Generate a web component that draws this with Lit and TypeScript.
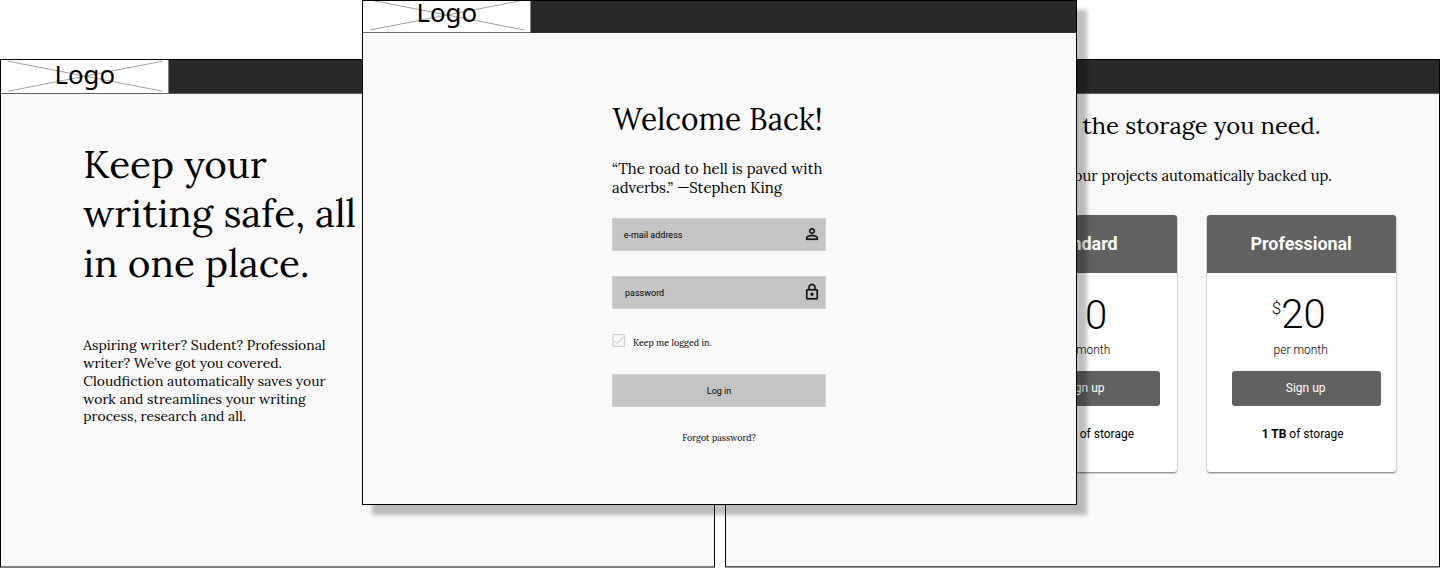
import { LitElement, html, css, svg } from "lit";
import { customElement, property } from "lit/decorators.js";

const personPath = svg`<path d="M12 5.9a2.1 2.1 0 1 1 0 4.2 2.1 2.1 0 0 1 0-4.2m0 9c2.97 0 6.1 1.46 6.1 2.1v1.1H5.9V17c0-.64 3.13-2.1 6.1-2.1M12 4C9.79 4 8 5.79 8 8s1.79 4 4 4 4-1.79 4-4-1.79-4-4-4zm0 9c-2.67 0-8 1.34-8 4v3h16v-3c0-2.66-5.33-4-8-4z"/>`;
const lockPath = svg`<path d="M12 17c1.1 0 2-.9 2-2s-.9-2-2-2-2 .9-2 2 .9 2 2 2zm6-9h-1V6c0-2.76-2.24-5-5-5S7 3.24 7 6v2H6c-1.1 0-2 .9-2 2v10c0 1.1.9 2 2 2h12c1.1 0 2-.9 2-2V10c0-1.1-.9-2-2-2zM8.9 6c0-1.71 1.39-3.1 3.1-3.1s3.1 1.39 3.1 3.1v2H8.9V6zM18 20H6V10h12v10z"/>`;

@customElement("app-header")
class AppHeader extends LitElement {
  static styles = css`
    :host { display: flex; background: #292929; border-bottom: 1px solid #5f5f5f; height: 33px; }
    .logo {
      display: grid; grid-template-rows: 100%; width: 167px; height: 100%; background: #fff;
      border-right: 1px solid #8a8a8a;
    }
    .logo > * { grid-area: 1 / 1; }
    .cross { display: block; width: 167px; height: 33px; overflow: hidden; }
    .name {
      font: 25.8px/30px "Noto Sans", sans-serif; color: #000;
      margin-left: 53.4px; margin-top: -1.5px;
    }
    :host([compact]) { height: 31px; border-bottom-color: #333; }
    :host([compact]) .logo { box-shadow: 0 1px 0 #6a6a6a; }
    :host([compact]) .cross { height: 31px; }
    :host([compact]) .name { line-height: 25px; margin-top: -1px; }
  `;
  @property({ type: Boolean, reflect: true }) compact = false;
  render() {
    const y = this.compact ? -1 : 1.2;
    return html`<div class="logo">
      <svg class="cross" fill="none" stroke="#777" stroke-width="0.7">
        <path d="M7 ${y} L161.5 ${y + 30} M161.5 ${y} L7 ${y + 30}" />
      </svg>
      <span class="name">Logo</span>
    </div>`;
  }
}

@customElement("price-card")
class PriceCard extends LitElement {
  static styles = css`
    :host {
      display: flex; flex-direction: column; width: 189px; height: 256.3px; background: #fff;
      border-radius: 3px; box-shadow: 0 1px 2px rgba(0, 0, 0, 0.55);
      font-family: Roboto, sans-serif; color: #000; text-align: center; white-space: nowrap;
    }
    .name {
      background: #616161; color: #fff; font-weight: 700; font-size: 17.9px; line-height: 57.7px;
      border-radius: 3px 3px 0 0; padding-right: 1px;
    }
    .price {
      display: flex; justify-content: center; padding: 17.6px 6px 0 0; margin-bottom: -0.1px;
      font-weight: 300; font-size: 40px; line-height: 47px;
    }
    .currency { font-size: 17px; line-height: 20px; margin-top: 7px; }
    .period { font-weight: 300; font-size: 12px; line-height: 14px; margin-top: 5.6px; padding-right: 2px; }
    .signup {
      background: #616161; color: #fff; font: 12px/34.5px Roboto, sans-serif; width: 149px; border: 0;
      border-radius: 3px; margin: 13.9px 0 0 25px; padding: 0 2px 0 0; height: 34.5px;
    }
    .storage { font-size: 12px; line-height: 14px; margin-top: 21.3px; padding-left: 2px; }
    :host([plan="Standard"]) .name { padding-right: 3px; }
    :host([plan="Standard"]) .price { padding: 18.6px 5px 0 0; margin-bottom: -1.1px; }
    :host([plan="Standard"]) .period { padding: 0 0 0 1px; }
    :host([plan="Standard"]) .signup { margin-left: 23px; }
    :host([plan="Standard"]) .storage { padding-left: 6px; }
  `;
  @property({ reflect: true }) plan = "";
  @property() amount = "";
  @property() space = "";
  render() {
    return html`
      <div class="name">${this.plan}</div>
      <div class="price"><span class="currency">$</span><span>${this.amount}</span></div>
      <div class="period">per month</div>
      <button class="signup">Sign up</button>
      <div class="storage"><b>${this.space}</b> of storage</div>
    `;
  }
}

@customElement("app-root")
class AppRoot extends LitElement {
  static styles = css`
    :host {
      display: block; position: relative; width: 1440px; height: 568px; overflow: hidden;
      background: #fff; color: #000; font-family: Lora, "Liberation Serif", serif;
    }
    .window { position: absolute; box-sizing: border-box; border: 1px solid #000; background: #f9f9f9; }
    h1, h2, p { margin: 0; font-weight: 400; white-space: nowrap; }
    .landing { left: 0; top: 59px; width: 715px; height: 509px; border-bottom: 2px solid #808080; }
    .pricing { left: 725px; top: 59px; width: 715px; height: 508px; border-bottom-color: #555; box-shadow: 0 1px 0 #999; }
    .login { left: 362px; top: 0; width: 715px; height: 505px; box-shadow: 10px 10px 4px rgba(0, 0, 0, 0.25); }

    .pitch { padding: 45.6px 0 0 82.3px; }
    .pitch h1 { font-size: 38.7px; line-height: 49.7px; }
    .pitch p { font-size: 13.92px; line-height: 17.85px; margin-top: 48.3px; }

    .form { display: flex; flex-direction: column; width: 214px; padding: 66.5px 0 0 249px; }
    .form h2 { font-size: 29.8px; line-height: 38px; padding-left: 0.6px; }
    .quote { font-size: 14.9px; line-height: 19.3px; margin-top: 21.7px; height: 39px; }
    .field {
      display: flex; align-items: center; justify-content: space-between; box-sizing: border-box;
      height: 33px; margin-top: 25px; padding: 0 4px 0 10.7px;
      background: #c4c4c4; border: 1px solid #d0d0d0; font: 9px/12px Roboto, sans-serif;
    }
    .field span { padding-top: 1.4px; }
    .field.first { margin-top: 19.8px; }
    .field.secret { padding-left: 12px; }
    .icon { width: 18px; height: 18px; fill: #111; stroke: #111; stroke-width: 0.3; }
    .keep { display: flex; gap: 8px; margin-top: 25px; height: 13px; font-size: 8.95px; line-height: 18px; }
    .check { width: 13px; height: 13px; fill: none; stroke: #c4c4c4; }
    .submit {
      height: 33px; margin-top: 27px; padding: 1px 0 0; background: #c4c4c4; border: 1px solid #d0d0d0;
      font: 9px/31px Roboto, sans-serif; color: #000;
    }
    .forgot { font-size: 8.95px; line-height: 12px; margin-top: 25px; text-align: center; }

    .plans { padding-top: 17.3px; text-align: right; }
    .plans h2 { font-size: 23.8px; line-height: 30px; padding-right: 118.3px; }
    .plans p { font-size: 14.8px; line-height: 20px; margin-top: 25px; padding-right: 107px; }
    .cards { display: flex; justify-content: flex-end; gap: 30px; padding: 29.1px 42.8px 0 0; }
  `;

  render() {
    return html`
      <section class="window landing">
        <app-header></app-header>
        <div class="pitch">
          <h1>Keep your<br />writing safe, all<br />in one place.</h1>
          <p>Aspiring writer? Sudent? Professional<br />writer? We’ve got you covered.<br />Cloudfiction automatically saves your<br />work and streamlines your writing<br />process, research and all.</p>
        </div>
      </section>

      <section class="window pricing">
        <app-header></app-header>
        <div class="plans">
          <h2>the storage you need.</h2>
          <p>your projects automatically backed up.</p>
          <div class="cards">
            <price-card plan="Standard" amount="10" space="100 GB"></price-card>
            <price-card plan="Professional" amount="20" space="1 TB"></price-card>
          </div>
        </div>
      </section>

      <section class="window login">
        <app-header compact></app-header>
        <div class="form">
          <h2>Welcome Back!</h2>
          <p class="quote">“The road to hell is paved with<br />adverbs.” —Stephen King</p>
          <div class="field first"><span>e-mail address</span><svg class="icon" viewBox="0 0 24 24">${personPath}</svg></div>
          <div class="field secret"><span>password</span><svg class="icon" viewBox="0 0 24 24">${lockPath}</svg></div>
          <div class="keep">
            <svg class="check" viewBox="0 0 13 13"><rect x="1" y="0.7" width="11.3" height="11.6" /><path d="M2.8 7 L5.3 9.6 L11 3.4" /></svg>
            <span>Keep me logged in.</span>
          </div>
          <button class="submit">Log in</button>
          <p class="forgot">Forgot password?</p>
        </div>
      </section>
    `;
  }
}
